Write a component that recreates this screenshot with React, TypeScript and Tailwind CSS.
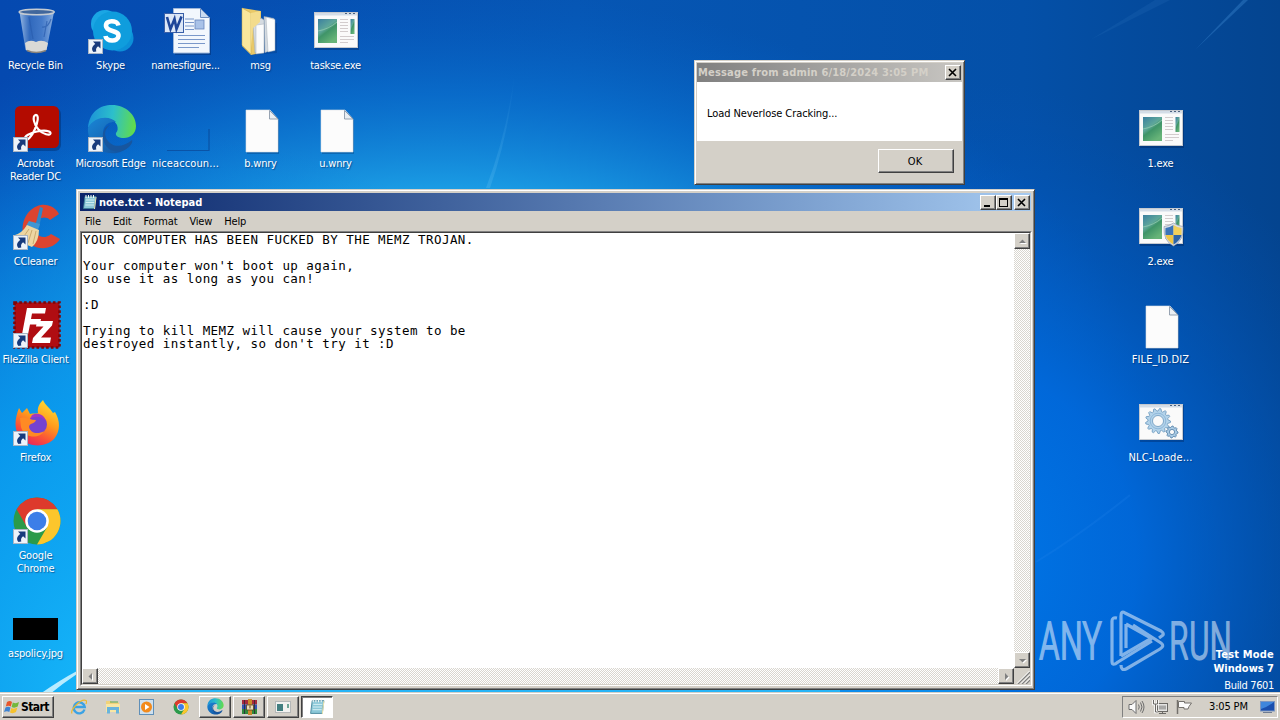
import type { ReactNode } from 'react'
import clsx from 'clsx'

const UI = "font-['DejaVu_Sans_Condensed','DejaVu_Sans',sans-serif] [font-stretch:condensed] text-[11px]"
const RAISED =
  'bg-[#d4d0c8] border border-t-white border-l-white border-r-[#404040] border-b-[#404040] shadow-[inset_-1px_-1px_0_#808080]'
const SUNKEN =
  'border border-t-[#808080] border-l-[#808080] border-r-white border-b-white'
const TRACK = 'bg-[#f4f2ef] bg-[repeating-conic-gradient(#d9d6cf_0%_25%,#fff_0%_50%)] bg-[length:2px_2px]'

const NOTE = `YOUR COMPUTER HAS BEEN FUCKED BY THE MEMZ TROJAN.

Your computer won't boot up again,
so use it as long as you can!

:D

Trying to kill MEMZ will cause your system to be
destroyed instantly, so don't try it :D`

function Wallpaper() {
  return (
    <svg className="absolute inset-0" width="1280" height="720" viewBox="0 0 1280 720">
      <defs>
        <linearGradient id="sky" x1="0" y1="0" x2="1" y2="0">
          <stop offset="0" stopColor="#0549b0" />
          <stop offset=".45" stopColor="#0656b4" />
          <stop offset=".8" stopColor="#0450a8" />
          <stop offset="1" stopColor="#04448f" />
        </linearGradient>
        <radialGradient id="glow" gradientUnits="userSpaceOnUse" cx="0" cy="0" r="1" gradientTransform="translate(440 400) scale(700 410)">
          <stop offset="0" stopColor="#26c8fa" />
          <stop offset=".5" stopColor="#1ca0e6" />
          <stop offset=".75" stopColor="#0a74d2" stopOpacity=".7" />
          <stop offset="1" stopColor="#0560c4" stopOpacity="0" />
        </radialGradient>
        <radialGradient id="low" gradientUnits="userSpaceOnUse" cx="0" cy="0" r="1" gradientTransform="translate(130 700) scale(560 580)">
          <stop offset="0" stopColor="#18bcfc" />
          <stop offset=".5" stopColor="#089cf0" stopOpacity=".85" />
          <stop offset="1" stopColor="#0078dc" stopOpacity="0" />
        </radialGradient>
        <radialGradient id="east" gradientUnits="userSpaceOnUse" cx="0" cy="0" r="1" gradientTransform="translate(960 560) scale(440 480)">
          <stop offset="0" stopColor="#0078e8" />
          <stop offset=".4" stopColor="#006ade" stopOpacity=".9" />
          <stop offset="1" stopColor="#0054ba" stopOpacity="0" />
        </radialGradient>
        <linearGradient id="ray" x1="0" y1="1" x2="0" y2="0">
          <stop offset="0" stopColor="#6cc4f4" stopOpacity=".25" />
          <stop offset="1" stopColor="#6cc4f4" stopOpacity="0" />
        </linearGradient>
      </defs>
      <rect width="1280" height="720" fill="url(#sky)" />
      <rect width="1280" height="720" fill="url(#glow)" />
      <rect width="1280" height="720" fill="url(#low)" />
      <rect width="1280" height="720" fill="url(#east)" />
      <path d="M515 70Q510 130 490 188H486Q508 130 515 70Z" fill="url(#ray)" />
      <path d="M1090 40L1155 0H1170Z" fill="#3d86d0" opacity=".14" />
      <path d="M1195 50L1243 0H1248Z" fill="#3d86d0" opacity=".4" />
      <path d="M1036 562Q1080 535 1130 495" stroke="#2b8cf0" strokeOpacity=".18" strokeWidth="2" fill="none" />
      <path d="M40 694Q60 680 77 671V674Q62 684 50 694Z" fill="#b8ecff" />
      <path d="M76 691H840" stroke="#28b4f6" strokeWidth="2" />
      <path d="M840 691H1000" stroke="#0c8cec" strokeWidth="2" />
    </svg>
  )
}

function Arrow() {
  return (
    <g transform="translate(1 32)">
      <rect x=".5" y=".5" width="14" height="14" fill="#edf3fa" stroke="#a9b6c6" />
      <path d="M5 2.500h7.500v7l-2.400-2.300C8.400 8.400 7.600 10 8.300 12.500L5.500 13C2.800 10 4.200 7 7.300 4.900Z" fill="#173a7c" />
    </g>
  )
}

function AppWindow({ children }: { children?: ReactNode }) {
  return (
    <g>
      <defs>
        <linearGradient id="scene" x1="0" y1="0" x2=".6" y2="1">
          <stop offset="0" stopColor="#3a7fa0" />
          <stop offset=".45" stopColor="#5fa79a" />
          <stop offset=".6" stopColor="#3f9468" />
          <stop offset="1" stopColor="#67b478" />
        </linearGradient>
      </defs>
      <rect x="3" y="6" width="44" height="37" fill="#001c50" opacity=".35" />
      <rect x="2.500" y="5.500" width="43" height="35" fill="#fafafa" stroke="#c5c9cf" />
      <path d="M3 6h42v2.500H3Z" fill="#d4dde7" />
      <path d="M33 6.500h2M37 6.500h2M41 6.500h2" stroke="#4a6280" strokeWidth="1.200" />
      {children ?? (
        <>
          <rect x="6" y="12" width="19" height="24" fill="url(#scene)" />
          <path d="M6 24Q17 22 25 15" stroke="#9ad0b4" strokeWidth="1" fill="none" opacity=".7" />
          <path d="M28 12.500h8M28 15.500h8M28 18.500h8M28 21.500h8M28 24.500h8M28 29.500h14M28 32.500h14M28 35.500h8" stroke="#d2cccd" />
          <rect x="38.500" y="12" width="4" height="15" fill="url(#scene)" />
        </>
      )}
    </g>
  )
}

function Shield() {
  return (
    <g transform="translate(27 20)">
      <path d="M9.500 0Q14 3 19 3.500Q20 18 9.500 23Q-1 18 0 3.500Q5 3 9.500 0Z" fill="#d9dee6" stroke="#8993a3" strokeWidth=".6" />
      <path d="M9.500 2V12H1.500Q1.200 8 1.500 5Q6 4.500 9.500 2Z" fill="#3b74b8" />
      <path d="M9.500 2V12H17.500Q17.800 8 17.500 5Q13 4.500 9.500 2Z" fill="#f2d05a" />
      <path d="M9.500 12V21.500Q3 18 1.500 12Z" fill="#eec548" />
      <path d="M9.500 12V21.500Q16 18 17.500 12Z" fill="#2d64a8" />
    </g>
  )
}

function Page() {
  return (
    <g>
      <path d="M10 6h23l9 9v34H10Z" fill="#002a60" opacity=".3" />
      <path d="M9 5h24l8 9v33H9Z" fill="#fcfcfc" stroke="#d9dde2" strokeWidth=".6" />
      <path d="M32.500 5.500v8.500H41Z" fill="#e9eef3" stroke="#7f8ea0" strokeWidth=".8" />
    </g>
  )
}

function ChromeMark() {
  return (
    <g>
      <circle cx="25" cy="24" r="23.500" fill="#2b9a4a" />
      <path d="M4.600 12.300A23.500 23.500 0 0 1 45.400 12.300H25L14.800 29.900Z" fill="#dd3a2c" />
      <path d="M45.400 12.300A23.500 23.500 0 0 1 25 47.500L35.200 29.900L25 12.300Z" fill="#fcc62c" />
      <circle cx="25" cy="24" r="11.800" fill="#fff" />
      <circle cx="25" cy="24" r="9.300" fill="#3c7ee8" />
    </g>
  )
}

function EdgeMark() {
  return (
    <g>
      <defs>
        <linearGradient id="edgeTop" x1="0" y1=".4" x2="1" y2=".5">
          <stop offset="0" stopColor="#1c93d8" />
          <stop offset=".5" stopColor="#2cbfcb" />
          <stop offset="1" stopColor="#63dc48" />
        </linearGradient>
        <linearGradient id="edgeLow" x1="0" y1="0" x2="1" y2="1">
          <stop offset="0" stopColor="#1a86d6" />
          <stop offset="1" stopColor="#124f9c" />
        </linearGradient>
      </defs>
      <path d="M1 23C2 7 13 0 25 0C39 0 49 10 49 21C49 29 43 33 37 33C32 33 28 31 29 28C31 26 31 23 30 20C25 10 9 11 1 23Z" fill="url(#edgeTop)" />
      <path d="M1 23C8 10 24 11 29 17C18 16 13 25 18 36C22 44 33 46 43 40C37 47 30 49 23 48C10 47 0 36 1 23Z" fill="url(#edgeLow)" />
      <path d="M23 20C16 25 17 33 23 38C29 43 38 41 45 35C46 37 44 40 42 42C34 49 21 48 17 37C14 28 17 22 23 20Z" fill="#17569f" />
    </g>
  )
}

function NoteMark() {
  return (
    <g>
      <path d="M3 2.500h11l-1.500 12H1.500Z" fill="#8cc8d8" stroke="#3e7f96" strokeWidth=".8" />
      <path d="M4 6h8.500M3.700 8.500h8.500M3.400 11h8.500" stroke="#d8f0f4" strokeWidth=".9" />
      <path d="M4 1v3M6.500 1v3M9 1v3M11.500 1v3" stroke="#f4f8f8" strokeWidth="1" />
      <path d="M14 3l-1.500 12" stroke="#e9e3b0" strokeWidth="1" />
    </g>
  )
}

function gearPath(cx: number, cy: number, r: number, teeth: number) {
  const pts: string[] = []
  for (let i = 0; i < teeth * 4; i++) {
    const a = (i / (teeth * 4)) * Math.PI * 2
    const d = i % 4 < 2 ? r : r * 0.8
    pts.push(`${(cx + d * Math.cos(a)).toFixed(2)},${(cy + d * Math.sin(a)).toFixed(2)}`)
  }
  return `M${pts.join('L')}Z`
}

const art: Record<string, ReactNode> = {
  bin: (
    <>
      <defs>
        <linearGradient id="glass" x1="0" x2="1" y1="0" y2="0">
          <stop offset="0" stopColor="#a9c6e9" stopOpacity=".9" />
          <stop offset=".3" stopColor="#3f73c0" stopOpacity=".75" />
          <stop offset=".65" stopColor="#5f8fd4" stopOpacity=".7" />
          <stop offset="1" stopColor="#9bbce6" stopOpacity=".9" />
        </linearGradient>
      </defs>
      <path d="M7.500 5L13.500 43Q24 49 34.500 43L42 5Z" fill="url(#glass)" />
      <path d="M13 36Q18 32 24 35Q30 32 36 36L34.500 43Q24 48 14 43Z" fill="#d9d9d6" />
      <path d="M15 43.500Q24 47.500 34 43.500" stroke="#88827a" fill="none" strokeWidth="1.500" />
      <path d="M30 20q6 1 9-8M17 10l4 22M32 30l3-16" stroke="#2a5cae" strokeWidth="1.200" fill="none" opacity=".7" />
      <ellipse cx="24.700" cy="5" rx="17.500" ry="2.800" fill="#41679c" stroke="#c5cbd2" strokeWidth="1.600" />
    </>
  ),
  skype: (
    <>
      <circle cx="18" cy="17" r="14" fill="#1aa6e4" />
      <circle cx="33" cy="31" r="13.500" fill="#0c90d8" />
      <circle cx="25.500" cy="24" r="19.500" fill="#0f9ddd" />
      <path d="M31.500 18.500C30.500 13 18.500 12.500 19 19C19.500 25.500 32 22.500 31.500 29C31 35.500 19 34.500 18.500 29" stroke="#fff" strokeWidth="4.600" fill="none" />
      <Arrow />
    </>
  ),
  word: (
    <>
      <path d="M13 3h26l10 9v36H13Z" fill="#001c50" opacity=".35" />
      <path d="M11.500 1.500h27l9 9V46h-36Z" fill="#f2f7fd" stroke="#9eb6d8" />
      <path d="M38.500 1.500v9h9Z" fill="#c9dbf1" stroke="#6f8fc0" />
      <path d="M23 12h9M23 15.500h9M23 19h9M23 22.500h9M16 28.500h27M16 32.500h27M16 36.500h27M16 40.500h21" stroke="#7a98ca" />
      <rect x="33" y="13" width="9" height="9" fill="#a9c2e8" stroke="#6786bc" strokeWidth=".8" />
      <rect x="2.500" y="6.500" width="19" height="19" fill="#dce7f7" stroke="#3a60a8" />
      <path d="M5 10l3.500 12L12.500 12l2 10L19.500 9.500" stroke="#1f4699" strokeWidth="2.600" fill="none" />
    </>
  ),
  folder: (
    <>
      <path d="M12 12l28 4v30l-26 2Z" fill="#001c50" opacity=".2" />
      <path d="M5 1l19 3v17l-5 26-5 1L5 39Z" fill="#e9c968" />
      <path d="M27 9.500l10 2v31l-9 3Z" fill="#d5dbe1" stroke="#9aa8b5" strokeWidth=".5" />
      <path d="M29 10l9 2.500v31l-7 1.500Z" fill="#fcfdfd" stroke="#a5afb9" strokeWidth=".5" />
      <path d="M16 18l8-7 3 2v32l-9 1Z" fill="#d5dbe1" stroke="#9aa8b5" strokeWidth=".5" />
      <path d="M19 18l8-1v29l-8 1Z" fill="#fafbfc" stroke="#a5afb9" strokeWidth=".5" />
      <path d="M5 1l9 5v41L5 38Z" fill="#f9e79c" stroke="#c7a74c" strokeWidth=".5" />
      <path d="M14 6l9-2v11l-7 6-2 20Z" fill="#f3dc8c" />
    </>
  ),
  exe: <AppWindow />,
  exeShield: (
    <>
      <AppWindow />
      <Shield />
    </>
  ),
  gears: (
    <AppWindow>
      <path d={gearPath(21, 22, 12.500, 13)} fill="#b3d3ea" stroke="#6a97bd" strokeWidth=".8" />
      <circle cx="21" cy="22" r="7.800" fill="none" stroke="#8fb8da" />
      <circle cx="21" cy="22" r="5.500" fill="#fafafa" stroke="#6a97bd" strokeWidth=".8" />
      <path d={gearPath(35, 33, 6, 8)} fill="#a8cae4" stroke="#4f7ca4" strokeWidth=".8" />
      <circle cx="35" cy="33" r="2.600" fill="#fafafa" stroke="#4f7ca4" strokeWidth=".8" />
    </AppWindow>
  ),
  page: <Page />,
  acrobat: (
    <>
      <rect x="4" y="3" width="45" height="43" rx="6" fill="#001c50" opacity=".35" />
      <rect x="3" y="1" width="44" height="42" rx="5.500" fill="#b30b00" />
      <path d="M13 34C12 31 18 28 25 26.500C32 25 39 25.500 38.500 28.500C38 31 31 29.500 26.500 24.500C22 20 20 11.500 23.500 10C27.500 9.500 25.500 18 23 24C20 31 15 37 13 34Z" fill="none" stroke="#fff" strokeWidth="2.200" />
      <Arrow />
    </>
  ),
  edge: (
    <>
      <EdgeMark />
      <Arrow />
    </>
  ),
  faint: <path d="M5 45.500H47V24" stroke="#0a3f8c" strokeWidth="1.200" opacity=".6" fill="none" />,
  ccleaner: (
    <>
      <path d="M47 11L38 17C33 12 25 15 23 23C22 32 31 38 39 31L48 36C40 49 19 48 12 34C7 20 16 4 29 2C37 1 44 5 47 11Z" fill="#dc4430" />
      <path d="M28 4l3 1-4 20-4-1Z" fill="#2f86c8" />
      <path d="M17 18l11 3-2 6-12-4Z" fill="#3f96d4" />
      <path d="M15 22l12 5Q27 38 20 44Q9 40 3 32Q10 30 15 22Z" fill="#edd6a2" />
      <path d="M17 26l-7 10M20 27l-4 13M24 28l-3 13" stroke="#c5a468" strokeWidth=".9" />
      <Arrow />
    </>
  ),
  filezilla: (
    <>
      <rect x="2.500" y="1.500" width="45" height="45" fill="#b00d12" stroke="#7d0508" strokeWidth="2.600" strokeDasharray="2.600 2.200" />
      <path d="M15 7H34L33 12.500H20L19 18H29L28 23.500H18L15.500 36H9.500Z" fill="#fff" />
      <path d="M25 20H41L40 24.500L29 36.500H39L38 42H20L21 37L31.500 25.500H24Z" fill="#fff" />
      <Arrow />
    </>
  ),
  firefox: (
    <>
      <defs>
        <linearGradient id="fox" x1=".8" y1="0" x2=".3" y2="1">
          <stop offset="0" stopColor="#ffe135" />
          <stop offset=".45" stopColor="#ff9a1c" />
          <stop offset=".75" stopColor="#fb5038" />
          <stop offset="1" stopColor="#e62460" />
        </linearGradient>
      </defs>
      <path d="M31 1C33 6 38 9 41 14L43 13C48 21 49 32 42 40C33 49 17 48 9 40C1 31 3 19 7 9L10 14L15 9L18 15C21 14 24 15 26 14C25 8 28 4 31 1Z" fill="url(#fox)" />
      <circle cx="25.500" cy="25.500" r="9.500" fill="#7542cf" />
      <path d="M17 22C20 17 28 16 34 22C32 15 25 13 20 16Z" fill="#a236c4" />
      <path d="M8 19C13 17 18 21 24 21C23 25 17 24 17 28C18 34 26 36 32 32C28 40 12 40 9 28Z" fill="#ff8a24" />
      <Arrow />
    </>
  ),
  chrome: (
    <>
      <ChromeMark />
      <Arrow />
    </>
  ),
  black: <rect x="1" y="23" width="45" height="22" fill="#000" />,
}

interface DeskItem {
  label: string
  icon: string
  wide?: boolean
}

const leftColumns: DeskItem[][] = [
  [
    { label: 'Recycle Bin', icon: 'bin' },
    { label: 'Acrobat\nReader DC', icon: 'acrobat' },
    { label: 'CCleaner', icon: 'ccleaner' },
    { label: 'FileZilla Client', icon: 'filezilla' },
    { label: 'Firefox', icon: 'firefox' },
    { label: 'Google\nChrome', icon: 'chrome' },
    { label: 'aspolicy.jpg', icon: 'black' },
  ],
  [
    { label: 'Skype', icon: 'skype' },
    { label: 'Microsoft Edge', icon: 'edge' },
  ],
  [
    { label: 'namesfigure...', icon: 'word' },
    { label: 'niceaccoun...', icon: 'faint', wide: true },
  ],
  [
    { label: 'msg', icon: 'folder' },
    { label: 'b.wnry', icon: 'page' },
  ],
  [
    { label: 'taskse.exe', icon: 'exe' },
    { label: 'u.wnry', icon: 'page' },
  ],
]

const rightColumn: DeskItem[] = [
  { label: '1.exe', icon: 'exe' },
  { label: '2.exe', icon: 'exeShield' },
  { label: 'FILE_ID.DIZ', icon: 'page', wide: true },
  { label: 'NLC-Loade...', icon: 'gears', wide: true },
]

function IconColumn({ items }: { items: DeskItem[] }) {
  return (
    <div className="flex w-[75px] flex-col">
      {items.map((item) => (
        <div key={item.label} className="flex h-[98px] flex-col items-center pt-[7px]">
          <svg width="48" height="48" viewBox="0 0 48 48" className="shrink-0 overflow-visible">
            {art[item.icon]}
          </svg>
          <span
            className={clsx(
              'mt-[4px] text-center leading-[13px] whitespace-pre text-white [text-shadow:1px_1px_1px_#00205080]',
              item.wide ? 'tracking-[0.1px]' : 'tracking-[-0.2px]',
            )}
          >
            {item.label}
          </span>
        </div>
      ))}
    </div>
  )
}

function CaptionButton({ kind, className }: { kind: 'min' | 'max' | 'close'; className?: string }) {
  return (
    <button type="button" className={clsx('flex h-[15px] w-4 items-center justify-center', RAISED, className)}>
      <svg width="10" height="9" viewBox="0 0 10 9" shapeRendering="crispEdges">
        {kind === 'min' && <path d="M1 7h6v2H1Z" />}
        {kind === 'max' && <path d="M0 0h9v9H0ZM1 2v6h7V2Z" fillRule="evenodd" />}
        {kind === 'close' && <path d="M1 1l7 7M8 1L1 8" stroke="#000" strokeWidth="1.600" shapeRendering="auto" />}
      </svg>
    </button>
  )
}

function ScrollButton({ d }: { d: string }) {
  return (
    <div className={clsx('flex size-4 shrink-0 items-center justify-center', RAISED)}>
      <svg width="9" height="9" viewBox="0 0 9 9">
        <path d={d} fill="#fff" transform="translate(1 1)" />
        <path d={d} fill="#808080" />
      </svg>
    </div>
  )
}

function Notepad() {
  return (
    <div className="absolute top-[189px] left-[76px] flex h-[501px] w-[959px] flex-col border border-t-[#d4d0c8] border-r-[#404040] border-b-[#404040] border-l-[#d4d0c8] bg-[#d4d0c8] py-[3px] pr-[2px] pl-[3px] shadow-[inset_1px_1px_0_#fff,inset_-1px_-1px_0_#808080]">
      <div className="mr-px flex h-[18px] shrink-0 items-center bg-linear-to-r from-[#0a246a] to-[#a6caf0] pr-px pl-[2px]">
        <svg width="16" height="16" viewBox="0 0 16 16">
          <NoteMark />
        </svg>
        <span className="ml-px pt-px leading-[13px] font-bold text-white">note.txt - Notepad</span>
        <CaptionButton kind="min" className="ml-auto" />
        <CaptionButton kind="max" />
        <CaptionButton kind="close" className="ml-[2px]" />
      </div>
      <div className="flex h-5 shrink-0 items-center gap-[12px] pl-[5px] leading-[13px] tracking-[-0.15px]">
        <span>File</span>
        <span>Edit</span>
        <span>Format</span>
        <span>View</span>
        <span>Help</span>
      </div>
      <div className={clsx('flex min-h-0 grow flex-col', SUNKEN)}>
        <div className="flex min-h-0 grow flex-col border border-t-[#404040] border-r-[#d4d0c8] border-b-[#d4d0c8] border-l-[#404040] bg-white">
          <div className="flex min-h-0 grow">
            <pre className="grow pl-px font-['DejaVu_Sans_Mono',monospace] text-[12.500px] leading-[13px] tracking-[0.450px] text-black">
              {NOTE}
            </pre>
            <div className={clsx('flex w-4 flex-col justify-between', TRACK)}>
              <ScrollButton d="M1 6L4.500 2.500L8 6Z" />
              <ScrollButton d="M1 3L4.500 6.500L8 3Z" />
            </div>
          </div>
          <div className="flex h-4 shrink-0">
            <div className={clsx('flex grow justify-between', TRACK)}>
              <ScrollButton d="M6 1L2.500 4.500L6 8Z" />
              <ScrollButton d="M3 1L6.500 4.500L3 8Z" />
            </div>
            <svg width="16" height="16" viewBox="0 0 16 16" className="bg-[#d4d0c8]">
              <path d="M4 16L16 4M8 16L16 8M12 16L16 12" stroke="#808080" strokeWidth="1.300" />
              <path d="M3 15.500L15.500 3M7 15.500L16 6.500M11 15.500L16 10.500" stroke="#fff" />
            </svg>
          </div>
        </div>
      </div>
    </div>
  )
}

function MessageBox() {
  return (
    <div className="absolute top-[60px] left-[694px] flex h-[125px] w-[271px] flex-col border border-t-[#d4d0c8] border-r-[#404040] border-b-[#404040] border-l-[#d4d0c8] bg-[#d4d0c8] p-[2px] shadow-[inset_1px_1px_0_#fff,inset_-1px_-1px_0_#808080]">
      <div className="flex h-[19px] shrink-0 items-center bg-linear-to-r from-[#808080] to-[#c8c6c2] pr-px pl-[1px]">
        <span className="leading-[13px] font-bold tracking-[0.18px] whitespace-nowrap text-[#d4d0c8]">
          Message from admin 6/18/2024 3:05 PM
        </span>
        <CaptionButton kind="close" className="ml-auto" />
      </div>
      <div className="flex h-[59px] shrink-0 items-center bg-white pt-[3px] pl-[10px] leading-[13px] tracking-[-0.08px]">
        Load Neverlose Cracking...
      </div>
      <div className="flex justify-end pt-2 pr-[8px]">
        <button type="button" className={clsx('h-6 w-[76px] pr-[2px] leading-[13px]', RAISED)}>
          OK
        </button>
      </div>
    </div>
  )
}

function Watermark() {
  return (
    <div className="absolute right-0 bottom-[27px] h-[92px] w-[245px]">
      <svg width="245" height="92" viewBox="1035 601 245 92" className="absolute inset-0 opacity-50">
        <g fill="#fff" fontFamily="Roboto, sans-serif" fontSize="52" fontWeight="300" stroke="#fff" strokeWidth="1.800">
          <text x="1039" y="659" textLength="63" lengthAdjust="spacingAndGlyphs">ANY</text>
          <text x="1169" y="659" textLength="63" lengthAdjust="spacingAndGlyphs">RUN</text>
        </g>
        <g fill="none" stroke="#fff" strokeWidth="3.200" strokeLinejoin="round">
          <path d="M1117 618Q1112 617 1112 621V661Q1112 667 1118 662L1152 641" />
          <path d="M1159 638L1163 635Q1164 633 1161 631L1125 613Q1121 610 1121 616V656" />
          <path d="M1126 624L1151 638M1126 624V648" />
          <path d="M1133 625L1161 643Q1165 646 1160 649L1126 669Q1121 671 1121 665" />
          <path d="M1121 656L1152 638" />
        </g>
      </svg>
      <div className="relative flex h-full flex-col items-end justify-end pr-[6px] pb-px text-white">
        <span className="leading-[14px] font-bold tracking-[0.18px]">Test Mode</span>
        <span className="leading-[14px] font-bold">Windows 7</span>
        <span className="mt-[3px] leading-[13px] tracking-[-0.35px]">Build 7601</span>
      </div>
    </div>
  )
}

function TaskButton({ active, children }: { active?: boolean; children: ReactNode }) {
  return (
    <button
      type="button"
      className={clsx(
        'flex h-[22px] w-8 items-center justify-center',
        active
          ? 'border border-t-[#404040] border-r-white border-b-white border-l-[#404040] bg-white shadow-[inset_1px_1px_0_#808080]'
          : RAISED,
      )}
    >
      {children}
    </button>
  )
}

function Taskbar() {
  return (
    <div className="absolute inset-x-0 bottom-0 flex h-7 items-center border-t border-[#d4d0c8] bg-[#d4d0c8] pr-[2px] pl-[2px] shadow-[inset_0_1px_0_#fff]">
      <button type="button" className={clsx('flex h-[22px] w-[52px] items-center gap-px pl-px', RAISED)}>
        <svg width="16" height="16" viewBox="0 0 16 16">
          <path d="M3 3Q6 1 8 3L6.800 7.500Q4.500 6 1.800 7.500Z" fill="#e8562a" />
          <path d="M8.800 3.500Q12 5 15 3L13.700 7.500Q10.500 9.500 7.600 8Z" fill="#74b83c" />
          <path d="M1.500 8.500Q4 7 6.500 8.500L5.300 13Q3 11.500 0 13Z" fill="#3d83d2" />
          <path d="M7.300 9Q10 10.500 13.400 8.500L12 13Q9 15 6 13.500Z" fill="#f6c22e" />
        </svg>
        <span className="text-[12px] font-bold tracking-[-0.6px]">Start</span>
      </button>
      <div className="ml-[17px] flex w-[128px] items-center gap-[18px]">
        <svg width="16" height="16" viewBox="0 0 16 16" className="shrink-0">
          <path d="M13.500 10.500A5.500 5.500 0 1 1 13.700 8H4" fill="none" stroke="#3ba2e4" strokeWidth="2.400" />
          <path d="M1 14.500C-1 11 10-1 15 1.500C16 2.500 15.500 4 14.800 5" fill="none" stroke="#eab830" strokeWidth="1.200" />
        </svg>
        <svg width="16" height="16" viewBox="0 0 16 16" className="shrink-0">
          <path d="M1 2h5l1 1.500h7V13H1Z" fill="#f0d27a" />
          <path d="M1 5h14v8H1Z" fill="#f8e6a4" />
          <path d="M2 8h12v6.500h-3V11H5v3.500H2Z" fill="#69b4dc" />
          <path d="M5 3h8" stroke="#58a852" />
        </svg>
        <svg width="16" height="16" viewBox="0 0 16 16" className="shrink-0">
          <rect x=".5" y=".5" width="14" height="15" fill="#cfe0ee" stroke="#5f8fb8" />
          <circle cx="7.500" cy="8" r="5.500" fill="#f28a1c" />
          <path d="M6 5l4.500 3L6 11Z" fill="#fff" />
        </svg>
        <svg width="16" height="16" viewBox="0 0 50 48" className="shrink-0">
          <ChromeMark />
        </svg>
      </div>
      <div className="flex gap-[2px]">
        <TaskButton>
          <svg width="17" height="17" viewBox="0 0 50 49">
            <EdgeMark />
          </svg>
        </TaskButton>
        <TaskButton>
          <svg width="17" height="16" viewBox="0 0 17 16">
            <path d="M1 1h15v4.500H1Z" fill="#a52a3e" />
            <path d="M1 5.500h15V10H1Z" fill="#3356b4" />
            <path d="M1 10h15v5H1Z" fill="#2f8a3c" />
            <path d="M3.500 1v14M13.500 1v14" stroke="#2c2438" strokeWidth=".8" />
            <path d="M7 0h4v16H7Z" fill="#c98a2c" />
            <path d="M5.500 6h7v5h-7Z" fill="#e9dcb8" stroke="#5c431c" strokeWidth=".8" />
            <path d="M9 6.500v3" stroke="#5c431c" />
          </svg>
        </TaskButton>
        <TaskButton>
          <svg width="16" height="14" viewBox="0 0 16 14">
            <rect x=".5" y="1.500" width="15" height="11" fill="#f2f2f0" stroke="#b5b8b8" />
            <path d="M2 4h6v7H2Z" fill="#437f80" />
            <path d="M12 4h2v4h-2Z" fill="#6ea596" />
          </svg>
        </TaskButton>
        <TaskButton active>
          <svg width="17" height="17" viewBox="0 0 16 16">
            <NoteMark />
          </svg>
        </TaskButton>
      </div>
      <div className={clsx('ml-auto flex h-[22px] w-[156px] items-center pl-[5px]', SUNKEN)}>
        <svg width="18" height="16" viewBox="0 0 18 16" fill="none" stroke="#6d6d6d">
          <path d="M1 5.500h3L8 1.500v13L4 10.500H1Z" fill="#fafafa" />
          <path d="M10.500 5.500q1.500 2.500 0 5M12.500 3.500q3 4.500 0 9M14 2q4 6 0 12" />
        </svg>
        <svg width="18" height="16" viewBox="0 0 18 16" className="ml-[6px]" fill="none" stroke="#6b6965">
          <rect x="5.500" y="4.500" width="10" height="8" fill="#e4e4e2" />
          <path d="M7 6.500h7v4H7Z" fill="#a8a8a6" stroke="none" />
          <path d="M7 14.500h7M10.500 12.500v2" />
          <path d="M1.500 1v4h4V1M3.500 5V13H6" stroke="#fff" strokeWidth="2.500" />
          <path d="M1.500 1v4h4V1M3.500 5V13H6" />
        </svg>
        <svg width="17" height="16" viewBox="0 0 17 16" className="ml-[6px]">
          <path d="M1.500 1v14" stroke="#74716c" strokeWidth="1.500" />
          <path d="M2.500 2.500H8.500V4H15.500L13 7.500L12 10H8V8.500H2.500Z" fill="#fcfcfc" stroke="#74716c" />
        </svg>
        <span className="ml-[16px] leading-[13px] tracking-[-0.15px] whitespace-nowrap">3:05 PM</span>
        <svg width="15" height="14" viewBox="0 0 15 14" className="mr-[2px] ml-auto">
          <rect x=".5" y="1.500" width="14" height="9.500" fill="#1a4fae" stroke="#7d96c0" />
          <path d="M1 9Q7 7 14 2H1Z" fill="#3f86dc" />
          <path d="M3 12.500h9" stroke="#6f7c92" />
        </svg>
      </div>
    </div>
  )
}

export default function App() {
  return (
    <div className={clsx('relative h-[720px] w-[1280px] overflow-hidden bg-[#0a60c0] text-black', UI)}>
      <Wallpaper />
      <div className="absolute top-0 left-[-2px] flex">
        {leftColumns.map((items) => (
          <IconColumn key={items[0].label} items={items} />
        ))}
      </div>
      <div className="absolute top-[98px] right-[82px]">
        <IconColumn items={rightColumn} />
      </div>
      <MessageBox />
      <Watermark />
      <Notepad />
      <Taskbar />
    </div>
  )
}
